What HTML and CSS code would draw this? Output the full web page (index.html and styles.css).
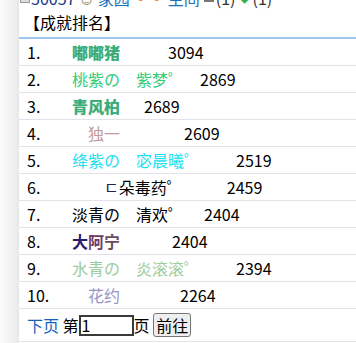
FILE: index.html
```html
<!DOCTYPE html>
<html lang="zh-CN">
<head>
<meta charset="utf-8">
<title>成就排名</title>
<link rel="stylesheet" href="styles.css">
</head>
<body>
<div class="page">
  <div class="topline">
    <span class="ico-img"></span><a class="uid">50057</a><span class="ico-face">☺</span><a class="lnk">家园</a><span class="dots">··</span><a class="lnk">主间</a> <span class="ico-mail"></span>(1)<span class="ico-dia">◆</span>(1)
  </div>
  <div class="title">【成就排名】</div>
  <ul class="rank">
    <li class="row"><span class="no">1.</span><span class="nm c-green b">嘟嘟猪</span><span class="sc">&emsp;&emsp;&emsp;3094</span></li>
    <li class="row"><span class="no">2.</span><span class="nm c-lgreen">桃紫の　紫梦゜</span><span class="sc">&emsp;2869</span></li>
    <li class="row"><span class="no">3.</span><span class="nm c-green b">青风柏</span><span class="sc">&emsp;&emsp14;&emsp14;2689</span></li>
    <li class="row"><span class="no">4.</span><span class="nm c-rose">　独一</span><span class="sc">&emsp;&emsp;&emsp;&emsp;2609</span></li>
    <li class="row"><span class="no">5.</span><span class="nm c-cyan">绛紫の　宓晨曦゜</span><span class="sc">&emsp;&emsp;&emsp14;2519</span></li>
    <li class="row"><span class="no">6.</span><span class="nm">　　<span class="c-hook">ㄷ</span>朵毒药゜</span><span class="sc">&emsp;&emsp;&ensp;&emsp14;2459</span></li>
    <li class="row"><span class="no">7.</span><span class="nm">淡青の　清欢゜</span><span class="sc">&emsp;&emsp14;2404</span></li>
    <li class="row"><span class="no">8.</span><span class="nm b"><span class="c-navy">大</span><span class="c-plum">阿</span><span class="c-mauve">宁</span></span><span class="sc">&emsp;&emsp;&emsp;&emsp14;2404</span></li>
    <li class="row"><span class="no">9.</span><span class="nm c-sage">水青の　炎滚滚゜</span><span class="sc">&emsp;&emsp;&emsp14;2394</span></li>
    <li class="row"><span class="no">10.</span><span class="nm c-lav">　花约</span><span class="sc">&emsp;&emsp;&emsp;&ensp;&emsp14;2264</span></li>
    <li class="row pager"><a class="next">下页</a> 第<input class="pg" type="text" value="1">页 <button class="go">前往</button></li>
  </ul>
</div>
</body>
</html>
```
FILE: styles.css
```css
html, body {
  margin: 0;
  padding: 0;
}
body {
  background: linear-gradient(to right, #fbfbfb 0, #ececec 17px, #e4e4e4 19px, #ffffff 19px);
  font-family: "Noto Sans CJK SC", "Microsoft YaHei", sans-serif;
  font-size: 16px;
  color: #000;
  height: 343px;
  overflow: hidden;
}
.page {
  margin-left: 19px;
  background: #fff;
}
.topline {
  height: 20px;
  line-height: 20px;
  margin-top: -12px;
  white-space: nowrap;
  display: flex;
  align-items: center;
  color: #333;
}
.ico-img {
  display: inline-block;
  width: 8px;
  height: 8px;
  border: 1px solid #999;
  background: #ddd;
  margin: 0 1px 0 1px;
}
.uid { color: #1a3a8a; }
.ico-face { color: #8a7050; margin: 0 3px; }
.lnk { color: #1e6fb8; }
.dots { color: #f08a20; margin: 0 3px; font-weight: bold; }
.ico-mail {
  display: inline-block;
  width: 10px;
  height: 8px;
  background: #777;
  margin: 0 2px 0 4px;
}
.ico-dia { color: #30b040; margin: 0 2px 0 3px; font-size: 12px; }
.title {
  height: 29px;
  line-height: 29px;
  padding-left: 5px;
  font-size: 16px;
  border-bottom: 2px solid #9fc6ec;
}
.rank {
  list-style: none;
  margin: 0;
  padding: 0;
}
.row {
  display: flex;
  align-items: center;
  height: 26px;
  line-height: 26px;
  padding-left: 8px;
  border-bottom: 1px solid #e2e2e8;
  white-space: pre;
}
.no {
  width: 45px;
  flex: none;
}
.nm, .sc { white-space: pre; }
.b { font-weight: bold; }
.c-green { color: #3aaa77; text-shadow: 0 0 1px rgba(60, 170, 120, 0.6); }
.c-lgreen { color: #35cc7c; }
.c-rose { color: #c29a9a; }
.c-cyan { color: #1fe0ee; }
.c-hook { color: #2a2050; }
.c-navy { color: #2a1c70; }
.c-plum { color: #6a3a66; }
.c-mauve { color: #6a4a5e; }
.c-sage { color: #9ccc9c; }
.c-lav { color: #9496c8; }
.pager {
  height: 32px;
  line-height: 32px;
}
.next { color: #1462b8; }
.pg {
  box-sizing: border-box;
  width: 55px;
  height: 21px;
  border: 2px solid #3a3a3a;
  padding: 0 1px;
  margin: 0;
  font-family: "Noto Sans CJK SC", sans-serif;
  font-size: 16px;
  line-height: 17px;
  color: #000;
  background: #fff;
  outline: none;
}
.go {
  box-sizing: border-box;
  height: 24px;
  padding: 0 2px;
  margin: 0;
  font-family: "Noto Sans CJK SC", sans-serif;
  font-size: 16px;
  line-height: 20px;
  background: #efefef;
  border: 1px solid #767676;
  border-radius: 3px;
  color: #000;
}
```
